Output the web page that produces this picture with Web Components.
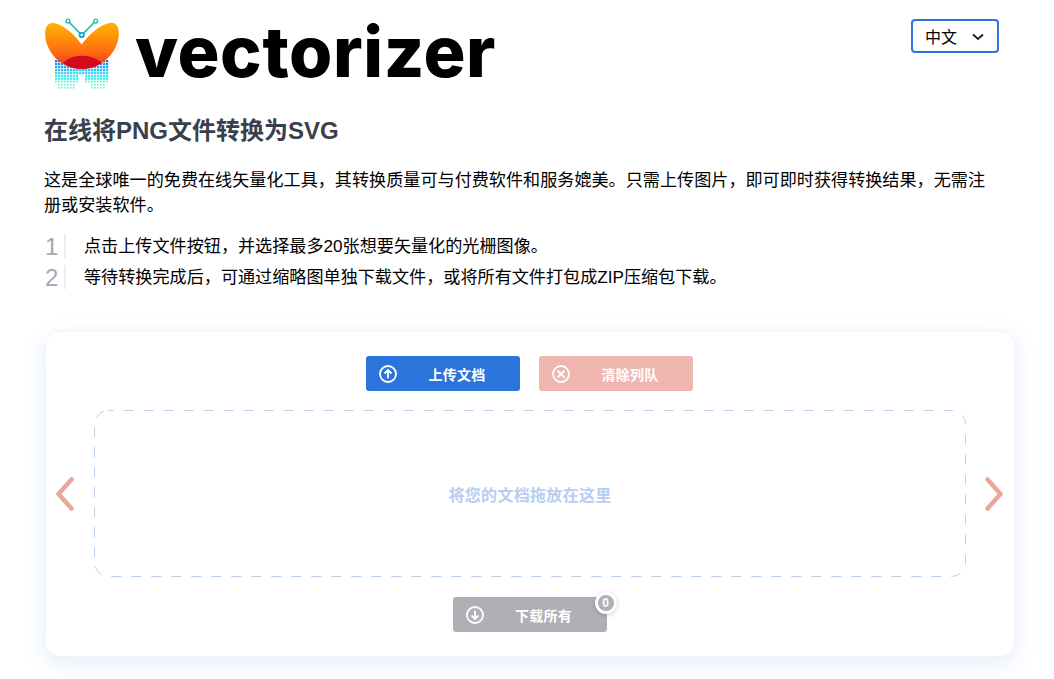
<!DOCTYPE html>
<html lang="zh">
<head>
<meta charset="utf-8">
<title>vectorizer</title>
<style>
    html, body { margin: 0; background: #fff; }
    body { font-family: "Liberation Sans", "Noto Sans CJK SC", sans-serif; color: #000; }
</style>
</head>
<body>
<vz-page>
    <vz-header></vz-header>
    <h1 slot="title">在线将PNG文件转换为SVG</h1>
    <p slot="intro">这是全球唯一的免费在线矢量化工具，其转换质量可与付费软件和服务媲美。只需上传图片，即可即时获得转换结果，无需注册或安装软件。</p>
    <vz-step number="1">点击上传文件按钮，并选择最多20张想要矢量化的光栅图像。</vz-step>
    <vz-step number="2">等待转换完成后，可通过缩略图单独下载文件，或将所有文件打包成ZIP压缩包下载。</vz-step>
    <vz-uploader></vz-uploader>
</vz-page>

<script>
class VzPage extends HTMLElement {
    constructor() {
        super();
        this.attachShadow({ mode: 'open' });
        this.shadowRoot.innerHTML = `
            <style>
                :host { display: block; height: 664px; padding: 15px 39px 0 45px; }
                .head { margin-bottom: 25px; }
                ::slotted(h1) { margin: 0 0 21px -1px; font-size: 24px; line-height: 32px; font-weight: bold; color: #3a3f4b; }
                ::slotted(p) { margin: 0 24px 16px -1px; font-size: 17.120px; line-height: 25px; }
                .steps { display: flex; flex-direction: column; gap: 7px; margin-bottom: 42px; }
            </style>
            <div class="head"><slot name="header"></slot></div>
            <slot name="title"></slot>
            <slot name="intro"></slot>
            <div class="steps"><slot name="steps"></slot></div>
            <slot name="card"></slot>
        `;
    }

    connectedCallback() {
        this.querySelector('vz-header').slot = 'header';
        this.querySelectorAll('vz-step').forEach(step => { step.slot = 'steps'; });
        this.querySelector('vz-uploader').slot = 'card';
    }
}

class VzHeader extends HTMLElement {
    constructor() {
        super();
        this.attachShadow({ mode: 'open' });
        this.shadowRoot.innerHTML = `
            <style>
                :host { display: flex; justify-content: space-between; align-items: flex-start; height: 75px; padding-right: 16px; }
                .brand { display: flex; align-items: flex-start; gap: 14px; margin-left: -1px; }
                svg.mark { display: block; width: 77px; height: 75px; }
                .word { font-family: "Inter", "Liberation Sans", sans-serif; font-weight: 800; font-size: 70px; line-height: 72px; letter-spacing: 0.6px; color: #000; margin-top: 1px; }
                .lang { box-sizing: border-box; display: flex; align-items: center; justify-content: space-between; width: 88px; height: 34px; margin-top: 4px; padding: 0 13px 0 12px; border: 2px solid #2b74dc; border-radius: 4px; font-size: 16px; color: #000; }
                .lang svg { display: block; width: 12px; height: 8px; margin-top: 2px; }
            </style>
            <div class="brand">
                <svg class="mark" viewBox="44 15 77 75">
                    <defs>
                        <linearGradient id="wing" x1="0" y1="0" x2="0" y2="1">
                            <stop offset="0" stop-color="#ffb400"/>
                            <stop offset="0.6" stop-color="#ff6f12"/>
                            <stop offset="1" stop-color="#f0301c"/>
                        </linearGradient>
                        <linearGradient id="twig" x1="0" y1="0" x2="1" y2="1">
                            <stop offset="0" stop-color="#17c79a"/>
                            <stop offset="1" stop-color="#0aa6d6"/>
                        </linearGradient>
                    </defs>
                    <g id="dots"></g>
                    <path d="M81.700 44.500C75 35 65 25.500 54 23C47.500 22 44.500 28 45.200 36C46.500 53 62 69 81.700 69C101.500 69 117.500 53 118.800 35C119.300 27 116 22 110 23C99 25 88.500 35 81.700 44.500Z" fill="url(#wing)"/>
                    <path d="M63 63C67 58.500 74 55.700 81.700 55.700C90 55.700 97 58.500 101.700 63C96.500 66.800 89.500 69 81.700 69C74.500 69 68 66.800 63 63Z" fill="#d30a1e"/>
                    <path d="M68 21L81.700 35L95.700 21" fill="none" stroke="#14bfa0" stroke-width="1.600"/>
                    <circle cx="68" cy="21" r="1.900" fill="#fff" stroke="#17c79a" stroke-width="1.400"/>
                    <circle cx="95.700" cy="21" r="1.900" fill="#fff" stroke="#17c79a" stroke-width="1.400"/>
                    <circle cx="81.700" cy="35" r="2.200" fill="#fff" stroke="#0aa6d6" stroke-width="1.800"/>
                </svg>
                <div class="word">vectorizer</div>
            </div>
            <div class="lang">
                <span>中文</span>
                <svg viewBox="0 0 12 8"><path d="M1 1.500L6 6L11 1.500" fill="none" stroke="#222" stroke-width="2"/></svg>
            </div>
        `;
    }

    connectedCallback() {
        // halftone under the wings, one small square per grid cell
        const group = this.shadowRoot.querySelector('#dots');
        let squares = '';
        for (let y = 60; y < 88; y += 3) {
            for (let x = 55; x < 110; x += 3) {
                const off = Math.abs(x + 1 - 82);
                if (off > 27 || (y > 72 && off < 4)) continue;
                if (y > 82 && (off < 8 || off > 23)) continue;
                const t = (y - 60) / 28;
                const hue = 215 - t * 60;
                const size = y > 80 ? 1.600 : 2.300;
                squares += `<rect x="${x}" y="${y}" width="${size}" height="${size}" fill="hsl(${hue} 88% ${52 + t * 18}%)"/>`;
            }
        }
        group.innerHTML = squares;
    }
}

class VzStep extends HTMLElement {
    constructor() {
        super();
        this.attachShadow({ mode: 'open' });
        this.shadowRoot.innerHTML = `
            <style>
                :host { display: flex; align-items: center; height: 24px; font-size: 17.120px; }
                .num { box-sizing: border-box; width: 21px; height: 24px; border-right: 2px solid #eceef1; font-size: 24px; line-height: 26px; color: #a3a8b1; }
                .text { margin-left: 18px; padding-bottom: 3px; }
            </style>
            <div class="num"></div>
            <div class="text"><slot></slot></div>
        `;
    }

    connectedCallback() {
        this.shadowRoot.querySelector('.num').textContent = this.getAttribute('number');
    }
}

const ICONS = {
    up: '<path d="M9 13.500V5M5.500 8.500L9 5L12.500 8.500"/>',
    down: '<path d="M9 4.500V13M5.500 9.500L9 13L12.500 9.500"/>',
    clear: '<path d="M5.500 5.500L12.500 12.500M12.500 5.500L5.500 12.500"/>'
};

class VzButton extends HTMLElement {
    constructor() {
        super();
        this.attachShadow({ mode: 'open' });
        this.shadowRoot.innerHTML = `
            <style>
                :host { position: relative; box-sizing: border-box; display: flex; align-items: center; width: 154px; height: 35px; padding: 0 3px 0 13px; border-radius: 3px; background: var(--bg, #2b74dc); color: #fff; font-size: 14px; letter-spacing: 0.300px; font-weight: bold; }
                svg { display: block; width: 18px; height: 18px; flex: none; fill: none; stroke: #fff; stroke-width: 1.800; }
                .label { flex: 1; text-align: center; }
                .badge { position: absolute; right: -10px; top: -5px; box-sizing: border-box; width: 22px; height: 22px; border: 3px solid #fff; border-radius: 50%; background: var(--bg); box-shadow: 0 1px 4px rgba(0, 0, 0, .2); font-size: 12px; line-height: 16px; letter-spacing: 0; text-align: center; }
            </style>
            <svg viewBox="0 0 18 18"><circle cx="9" cy="9" r="8"/><g class="glyph"></g></svg>
            <span class="label"><slot></slot></span>
        `;
    }

    connectedCallback() {
        this.shadowRoot.querySelector('.glyph').innerHTML = ICONS[this.getAttribute('icon')];
        if (this.hasAttribute('count')) {
            const badge = document.createElement('span');
            badge.className = 'badge';
            badge.textContent = this.getAttribute('count');
            this.shadowRoot.appendChild(badge);
        }
    }
}

class VzDropzone extends HTMLElement {
    constructor() {
        super();
        this.attachShadow({ mode: 'open' });
        this.shadowRoot.innerHTML = `
            <style>
                :host { position: relative; display: flex; align-items: center; justify-content: center; height: 167px; font-size: 16px; letter-spacing: 0.3px; font-weight: bold; color: #b5cef3; }
                svg { position: absolute; inset: 0; width: 100%; height: 100%; }
                rect { fill: none; stroke: #b9cfef; stroke-width: 1; stroke-dasharray: 10 10; stroke-dashoffset: 5; }
            </style>
            <svg><rect x="0.500" y="0.500" width="871" height="166" rx="14"/></svg>
            <span><slot></slot></span>
        `;
    }
}

class VzUploader extends HTMLElement {
    constructor() {
        super();
        this.attachShadow({ mode: 'open' });
        this.shadowRoot.innerHTML = `
            <style>
                :host { display: block; box-sizing: border-box; width: 970px; height: 326px; padding-top: 24px; border: 1px solid #f4f5f7; border-radius: 14px; background: #fff; box-shadow: 0 6px 22px rgba(50, 110, 230, .14); }
                .row { display: flex; justify-content: center; gap: 19px; padding-right: 1px; }
                .mid { display: grid; grid-template-columns: 48px 872px 48px; align-items: center; margin: 19px 0 20px; }
                .arrow { display: flex; padding-left: 10px; }
                .arrow.next { padding-left: 19px; }
                .arrow svg { display: block; width: 18px; height: 34px; fill: none; stroke: #e9a79b; stroke-width: 4.500; stroke-linecap: round; stroke-linejoin: round; }
            </style>
            <div class="row">
                <vz-button icon="up">上传文档</vz-button>
                <vz-button icon="clear" style="--bg:#efb6b0">清除列队</vz-button>
            </div>
            <div class="mid">
                <div class="arrow"><svg viewBox="0 0 18 34"><path d="M15.500 2.500L2.500 17L15.500 31.500"/></svg></div>
                <vz-dropzone>将您的文档拖放在这里</vz-dropzone>
                <div class="arrow next"><svg viewBox="0 0 18 34"><path d="M2.500 2.500L15.500 17L2.500 31.500"/></svg></div>
            </div>
            <div class="row">
                <vz-button icon="down" count="0" style="--bg:#aeb0b5">下载所有</vz-button>
            </div>
        `;
    }
}

customElements.define('vz-page', VzPage);
customElements.define('vz-header', VzHeader);
customElements.define('vz-step', VzStep);
customElements.define('vz-button', VzButton);
customElements.define('vz-dropzone', VzDropzone);
customElements.define('vz-uploader', VzUploader);
</script>
</body>
</html>
